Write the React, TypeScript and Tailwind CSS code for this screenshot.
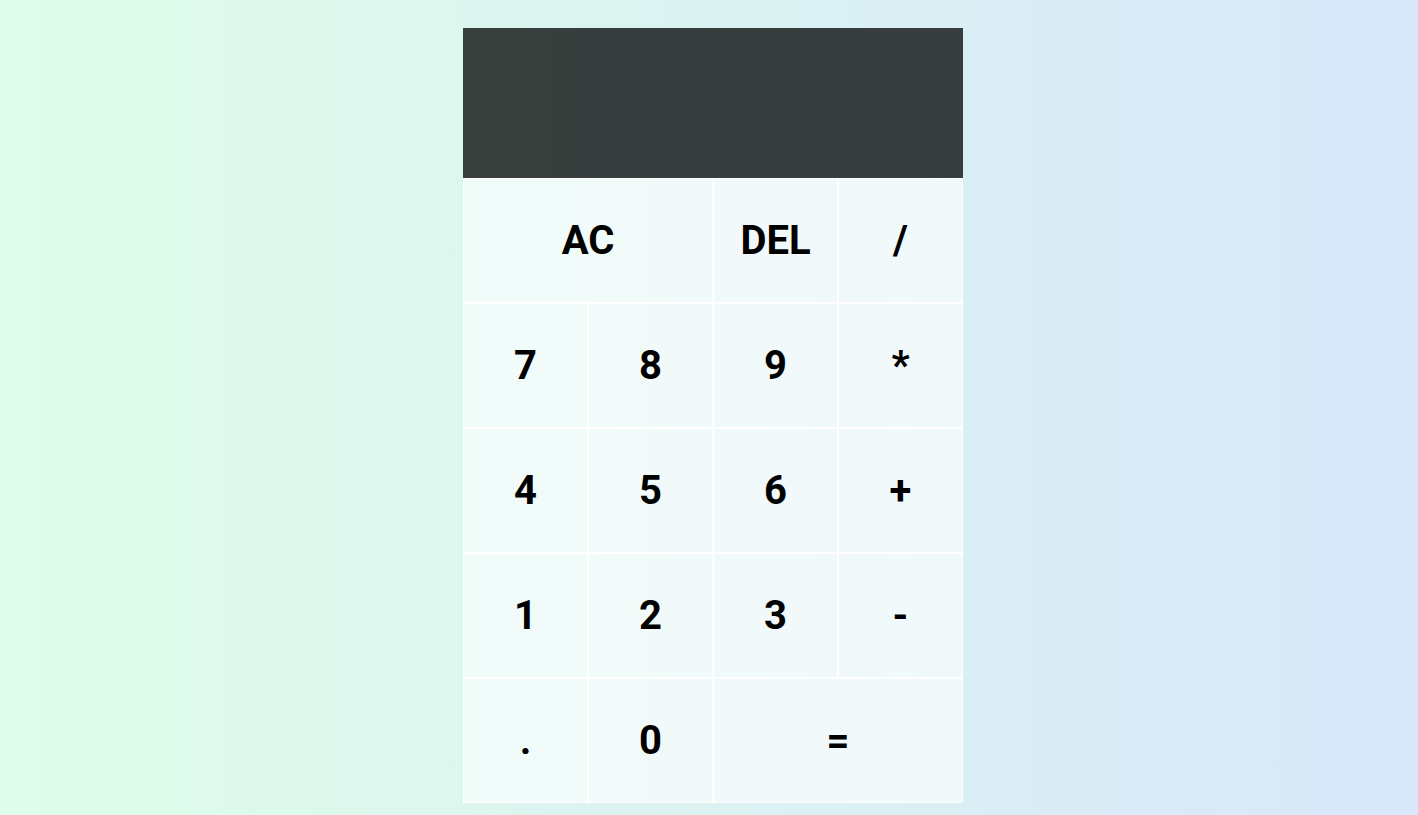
import React from 'react'

const KEYS: { label: string; span?: boolean }[] = [
  { label: 'AC', span: true }, { label: 'DEL' }, { label: '/' },
  { label: '7' }, { label: '8' }, { label: '9' }, { label: '*' },
  { label: '4' }, { label: '5' }, { label: '6' }, { label: '+' },
  { label: '1' }, { label: '2' }, { label: '3' }, { label: '-' },
  { label: '.' }, { label: '0' }, { label: '=', span: true },
]

export default function App() {
  return (
    <div
      className="min-h-screen w-full bg-gradient-to-r from-[#dffde9] to-[#d8e7fa] flex justify-center pl-[8px] pt-[28px] pb-[12px]"
      style={{ fontFamily: 'Roboto, "Liberation Sans", sans-serif' }}
    >
      <div className="grid grid-cols-[repeat(4,125px)] grid-rows-[150px_repeat(5,125px)]">
        {/* display */}
        <div className="col-span-4 bg-black/75 flex flex-col items-end justify-around p-2.5 break-all">
          <div className="text-white/75 text-2xl"></div>
          <div className="text-white text-[40px]"></div>
        </div>
        {KEYS.map(k => (
          <button
            key={k.label}
            className={`${k.span ? 'col-span-2' : ''} border border-white bg-white/60 text-black text-[40px] font-bold cursor-pointer outline-none hover:bg-white/90`}
          >
            {k.label}
          </button>
        ))}
      </div>
    </div>
  )
}
